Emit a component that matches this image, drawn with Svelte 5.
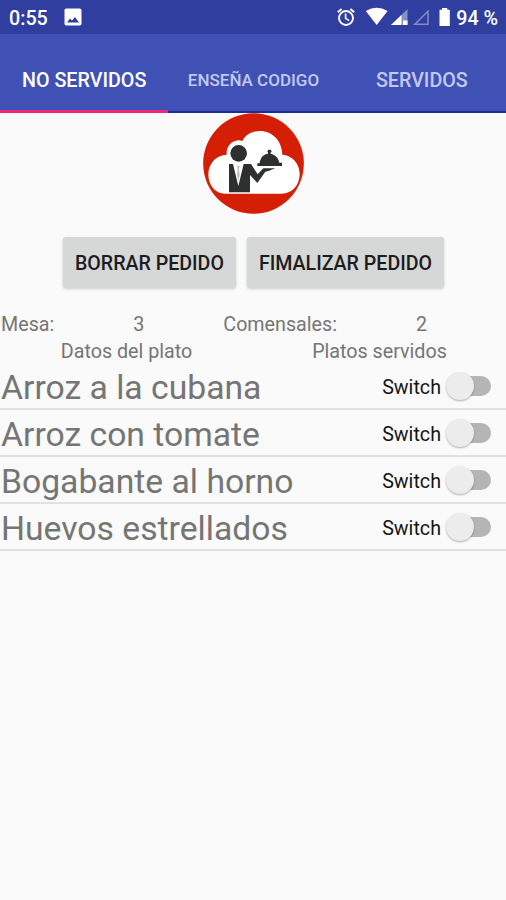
<script lang="ts">
    interface Dish {
        name: string;
        served: boolean;
    }

    const tabs = ["No servidos", "Enseña codigo", "Servidos"];

    let activeTab = $state(0);
    let dishes = $state<Dish[]>([
        { name: "Arroz a la cubana", served: false },
        { name: "Arroz con tomate", served: false },
        { name: "Bogabante al horno", served: false },
        { name: "Huevos estrellados", served: false },
    ]);
</script>

<div class="screen">
    <div class="status-bar">
        <span class="clock">0:55</span>
        <svg class="picture" viewBox="0 0 18 18">
            <rect x="0.5" y="0.5" width="17" height="17" rx="1.8" fill="#fff" />
            <path d="M3 14.5 6 10.5 8 12.5 11 9 15 14.5Z" fill="#303f9f" />
        </svg>
        <svg class="system" viewBox="336 6 118 24">
            <g fill="none" stroke="#fff" stroke-width="1.9">
                <circle cx="347" cy="19" r="7" />
                <path d="M338.8 13.2 342.6 10M355.2 13.2 351.4 10" />
                <path d="M346.6 14.6V19.4L350.2 21.6" stroke-width="1.6" />
            </g>
            <path d="M366.8 12Q377.5 5.5 388.6 12L377.7 26Z" fill="#fff" />
            <path d="M408.5 10V26H392Z" fill="#fff" opacity=".42" />
            <path d="M402.5 16V26H392Z" fill="#fff" />
            <path d="M404 21.5H408.5V26H404Z" fill="#fff" />
            <path
                d="M429 12.3V25.3H415.8Z"
                fill="none"
                stroke="#fff"
                stroke-width="1.5"
                opacity=".4"
            />
            <path d="M443 9H448.3V10.8H450.8V27H440.5V10.8H443Z" fill="#fff" />
        </svg>
        <span class="battery">94 %</span>
    </div>

    <nav class="tabs">
        {#each tabs as tab, i}
            <button
                class="tab"
                class:active={activeTab === i}
                class:compact={tab.length > 11}
                onclick={() => (activeTab = i)}
            >
                <span>{tab}</span>
            </button>
        {/each}
    </nav>

    <svg class="logo" viewBox="30 24 303 303">
        <circle cx="181.5" cy="175.500" r="151" fill="#d51f05" />
        <path
            d="M96 266C66 266 46 238 46 209C46 174 70 150 101 149C99 124 116 106 139 106L148 108C158 88 178 78 201 78C239 78 267 108 268 149C299 151 320 177 320 207C320 239 299 266 266 266Z"
            fill="#fff"
        />
        <g fill="#2e3030">
            <circle cx="137" cy="145" r="25" />
            <path
                d="M108 177H120L136 243 152 177H174L194 208 211 190 247 190 226 198 217 200 193 234 171 210V262H108Z"
            />
            <path d="M132 183H140L138 191 140 210 136 228 132 210 134 191Z" opacity=".3" />
            <path
                d="M193 183V175H200C202 157 211 148 225 146V143L223 139 226 134H233L236 139 233 143V146C247 149 257 159 259 173H267V183Z"
            />
        </g>
    </svg>

    <div class="actions">
        <button class="action">Borrar pedido</button>
        <button class="action">Fimalizar pedido</button>
    </div>

    <div class="order-info">
        <span>Mesa:</span>
        <span class="value">3</span>
        <span>Comensales:</span>
        <span class="value">2</span>
    </div>
    <div class="headings">
        <span>Datos del plato</span>
        <span>Platos servidos</span>
    </div>

    <ul class="dishes">
        {#each dishes as dish}
            <li class="dish">
                <span class="dish-name">{dish.name}</span>
                <label class="toggle">
                    <span class="toggle-label">Switch</span>
                    <input type="checkbox" bind:checked={dish.served} />
                    <span class="track"><span class="thumb"></span></span>
                </label>
            </li>
        {/each}
    </ul>
</div>

<style>
    :global(body) {
        background: #fafafa;
    }

    .screen {
        display: flex;
        flex-direction: column;
        min-height: 900px;
        background: #fafafa;
        color: #757575;
        font-family: Roboto, sans-serif;
        font-size: 19.7px;
    }

    button {
        border: none;
        font-family: inherit;
        text-transform: uppercase;
        white-space: nowrap;
    }

    .status-bar {
        display: flex;
        align-items: center;
        height: 34px;
        padding: 0 8px 0 9px;
        box-sizing: border-box;
        background: #303f9f;
        color: #fff;
        font-weight: 500;
        line-height: 34px;
    }

    .clock {
        width: 55px;
        padding-top: 4px;
    }

    .picture {
        width: 18px;
        height: 18px;
    }

    .system {
        width: 118px;
        height: 24px;
        margin-left: auto;
        margin-right: 3px;
    }

    .battery {
        padding-top: 4px;
    }

    .tabs {
        display: flex;
        height: 79px;
        box-sizing: border-box;
        border-bottom: 2px solid #1b2d9e;
        background: #3f51b5;
    }

    .tab {
        flex: 1;
        min-width: 0;
        height: 79px;
        padding: 17px 0 0;
        border-bottom: 3px solid transparent;
        background: none;
        color: #c3c9ee;
        font-size: 19.7px;
        font-weight: 500;
    }

    .tab.active {
        border-bottom-color: #e9267a;
        color: #fff;
    }

    .tab.compact {
        padding: 15px 0 0 1px;
        font-size: 17px;
    }

    .logo {
        width: 101px;
        height: 101px;
        margin: 0 auto;
    }

    .actions {
        display: flex;
        justify-content: center;
        gap: 11px;
        margin-top: 23px;
        padding-left: 1px;
    }

    .action {
        height: 51px;
        padding: 2px 12px 0;
        border-radius: 3px;
        background: #d6d7d7;
        box-shadow: 0 1px 3px rgba(0, 0, 0, 0.18);
        color: #1c1c1c;
        font-size: 19.6px;
        font-weight: 500;
    }

    .order-info {
        display: flex;
        margin-top: 23px;
        padding-left: 1px;
        line-height: 27px;
    }

    .value {
        flex: 1;
        text-align: center;
    }

    .headings {
        display: flex;
        height: 25px;
        line-height: 27px;
    }

    .headings span {
        flex: 1;
        text-align: center;
    }

    .dishes {
        margin: 0;
        padding: 0;
        list-style: none;
    }

    .dish {
        display: flex;
        align-items: center;
        justify-content: space-between;
        height: 47px;
        padding: 1px 15px 0 1px;
        box-sizing: border-box;
        border-bottom: 2px solid #e0e0e0;
    }

    .dish-name {
        padding-top: 3px;
        font-size: 33.7px;
    }

    .toggle {
        display: flex;
        align-items: center;
        color: #151515;
    }

    .toggle-label {
        padding-top: 2px;
    }

    .toggle input {
        position: absolute;
        opacity: 0;
    }

    .track {
        width: 42px;
        height: 20px;
        margin-left: 8px;
        border-radius: 10px;
        background: #b5b5b5;
    }

    .thumb {
        display: block;
        width: 28px;
        height: 28px;
        margin: -4px 0 0 -3px;
        border-radius: 50%;
        background: #ececec;
        box-shadow: 0 1px 2px rgba(0, 0, 0, 0.3);
        transition: margin 0.15s;
    }

    input:checked + .track .thumb {
        margin-left: 17px;
    }
</style>
